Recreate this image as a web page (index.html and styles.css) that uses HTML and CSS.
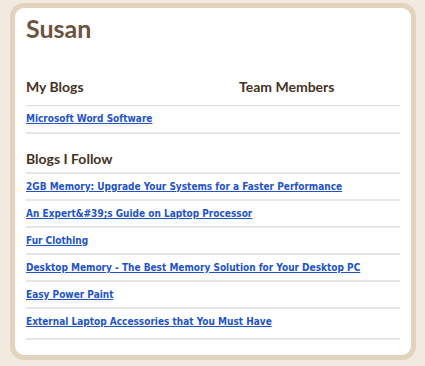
FILE: index.html
```html
<!DOCTYPE html>
<html lang="en">
<head>
  <meta charset="UTF-8" />
  <title>Susan</title>
  <link rel="stylesheet" href="styles.css">
</head>
<body>
  <div class="perfil">
    <h1>Susan</h1>

    <div class="cabecera">
      <h2 class="col-blogs">My Blogs</h2>
      <h2 class="col-equipo">Team Members</h2>
    </div>

    <ul class="lista mis-blogs">
      <li><a href="#">Microsoft Word Software</a></li>
    </ul>

    <h2 class="sigue">Blogs I Follow</h2>

    <ul class="lista">
      <li><a href="#">2GB Memory: Upgrade Your Systems for a Faster Performance</a></li>
      <li><a href="#">An Expert&amp;#39;s Guide on Laptop Processor</a></li>
      <li><a href="#">Fur Clothing</a></li>
      <li><a href="#">Desktop Memory - The Best Memory Solution for Your Desktop PC</a></li>
      <li><a href="#">Easy Power Paint</a></li>
      <li><a href="#">External Laptop Accessories that You Must Have</a></li>
    </ul>
  </div>
</body>
</html>
```

FILE: styles.css
```css
body {
  margin: 0;
  padding: 3px 9px 0 10px;
  background-color: #f3eadf;
  font-family: 'Lato', sans-serif;
}

.perfil {
  box-sizing: border-box;
  height: 357px;
  background-color: #fff;
  border: 5px solid #e2d3bd;
  border-radius: 14px;
  padding: 5px 11px 0 11px;
}

h1 {
  margin: 0;
  font-size: 25px;
  line-height: 30px;
  color: #6b5540;
}

h2 {
  margin: 0;
  font-size: 14px;
  line-height: 17px;
  color: #45331f;
}

.cabecera {
  display: flex;
  margin-top: 35px;
  padding-bottom: 10px;
  border-bottom: 1px solid #dcdcdc;
}

.col-blogs {
  width: 213px;
}

.lista {
  list-style: none;
  margin: 0;
  padding: 0;
}

.lista li {
  padding: 6px 0;
  border-bottom: 2px solid #e6e6e6;
  font-size: 10px;
  line-height: 13px;
}

.mis-blogs li {
  padding-bottom: 7px;
}

.lista li:last-child {
  padding-bottom: 10px;
}

.mis-blogs li:last-child {
  padding-bottom: 7px;
}

.lista a {
  color: #2353c7;
  font-weight: bold;
  font-family: 'DejaVu Sans Condensed', 'DejaVu Sans', sans-serif;
}

.sigue {
  padding: 16px 0 5px 0;
  border-bottom: 2px solid #e6e6e6;
}
```
